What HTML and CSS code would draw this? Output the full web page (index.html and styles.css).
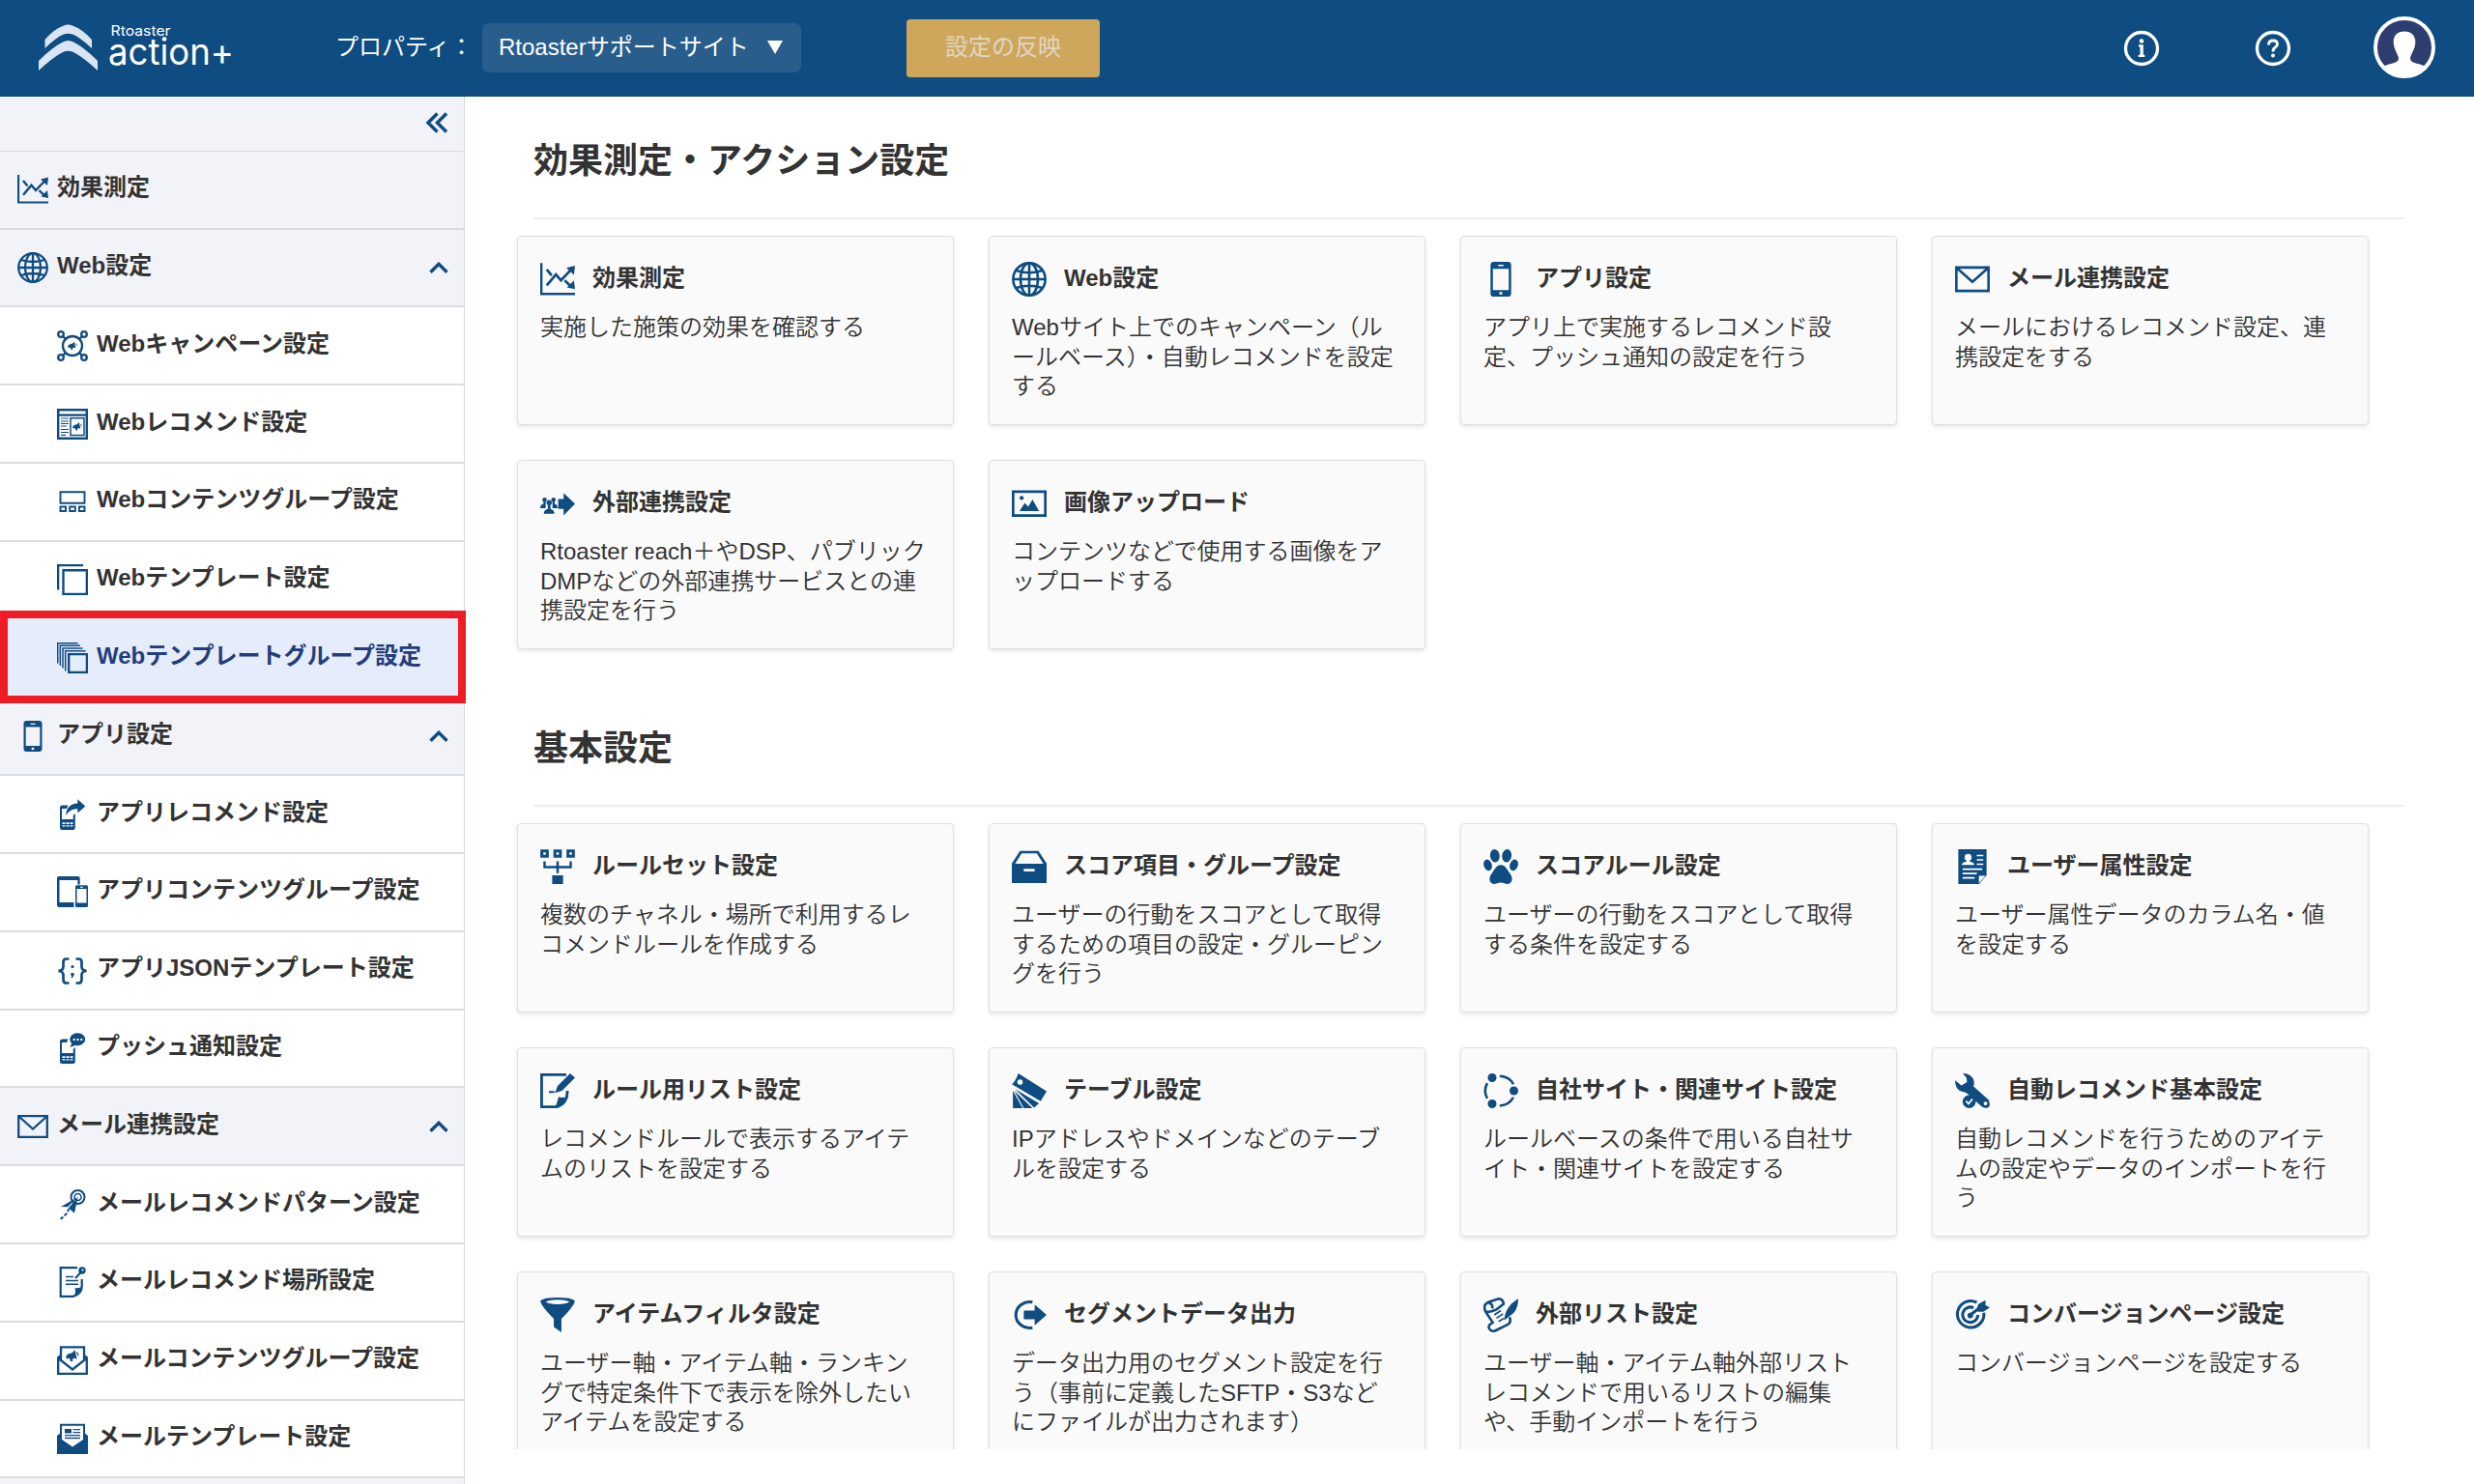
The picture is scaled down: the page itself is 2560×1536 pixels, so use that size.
FILE: index.html
```html
<!DOCTYPE html>
<html lang="ja">
<head>
<meta charset="utf-8">
<title>Rtoaster action+</title>
<link rel="stylesheet" href="styles.css">
</head>
<body>
<svg class="sprite" aria-hidden="true">
  <symbol id="horn" viewBox="0 0 12 12"><path d="M0 7L1.500 4.500L6 3L8 .5L10 8.500L6.500 8L6 11L4 10.500L3.500 8L1 8.500Z" fill="currentColor"/><path d="M9.500 2.500Q11.500 4 11 6" fill="none" stroke="currentColor"/></symbol>
  <symbol id="chart" viewBox="0 0 32 32"><path d="M1 1V29.500H32" fill="none" stroke="currentColor" stroke-width="2.200"/><path d="M6 21.700L14.500 11.700L19 17L29 6.500M6 7L10.500 12.500M22.500 17L28 22.500" fill="none" stroke="currentColor" stroke-width="2.400"/><path d="M32 3.500L31 12L24 5.500ZM32 25L24.500 23.500L31 17Z" fill="currentColor"/></symbol>
  <symbol id="globe" viewBox="0 0 32 32"><g fill="none" stroke="currentColor" stroke-width="2.300"><circle cx="16" cy="16" r="14.800"/><ellipse cx="16" cy="16" rx="8" ry="14.800"/><path d="M16 1V31M1 16H31M4 8Q16 12 28 8M4 24Q16 20 28 24"/></g></symbol>
  <symbol id="phone" viewBox="0 0 32 32"><path fill-rule="evenodd" d="M9.500 0h13a3 3 0 0 1 3 3v26a3 3 0 0 1-3 3h-13a3 3 0 0 1-3-3v-26a3 3 0 0 1 3-3zM8.700 6.500v19.500h14.600v-19.500zM13.500 2.700v1.400h5v-1.400zM14.700 27.700v2.400h2.600v-2.400z" fill="currentColor"/></symbol>
  <symbol id="mail" viewBox="0 0 32 32"><path d="M1.200 5.200H30.800V26.800H1.200ZM1.500 5.500L16 18.500L30.500 5.500" fill="none" stroke="currentColor" stroke-width="2.300"/></symbol>
  <symbol id="campaign" viewBox="0 0 32 32"><g fill="none" stroke="currentColor" stroke-width="2.300"><circle cx="16" cy="16" r="10"/><circle cx="4" cy="4" r="2.800"/><circle cx="28" cy="4" r="2.800"/><circle cx="4" cy="28" r="2.800"/><circle cx="28" cy="28" r="2.800"/><path d="M6 6L9 9M26 6L23 9M6 26L9 23M26 26L23 23"/></g><use href="#horn" x="10.500" y="11" width="11" height="10"/></symbol>
  <symbol id="recommend" viewBox="0 0 32 32"><g fill="none" stroke="currentColor"><path d="M1.200 1.200H30.800V30.800H1.200ZM1 6.600H31" stroke-width="2.400"/><path d="M14 9.800H28V27.500H14Z" stroke-width="1.500"/><path d="M4 10h8M4 13h8M4 15.500h8M4 18h6M4 21.500h8M4 24.500h8M4 27.300h5" stroke-width="1.200"/></g><use href="#horn" x="15.500" y="13.500" width="11" height="10"/></symbol>
  <symbol id="contents" viewBox="0 0 32 32"><g fill="none" stroke="currentColor" stroke-width="1.900"><path d="M3.500 6.300H28.500V17.700H3.500ZM3.500 21.500h5.500v4.500h-5.500ZM13.200 21.500h5.600v4.500h-5.600ZM23 21.500h5.500v4.500h-5.500Z"/></g></symbol>
  <symbol id="template" viewBox="0 0 32 32"><g fill="none" stroke="currentColor" stroke-width="2.400"><path d="M1.100 26.500V1.100H27M6.500 6.200H30.900V30.900H6.500Z"/></g></symbol>
  <symbol id="tgroup" viewBox="0 0 32 32"><path d="M12.200 12.200H30.900V30.900H12.200Z" fill="none" stroke="currentColor" stroke-width="2.300"/><path d="M.7 21.500V.7H21.500M3.300 24V3.300H24M6 26.500V6H26.500M8.700 29.500V8.700H29.500" fill="none" stroke="currentColor" stroke-width="1.500"/></symbol>
  <symbol id="handset" viewBox="0 0 32 32"><path fill-rule="evenodd" d="M11.500 6.500H5.500a2.500 2.500 0 0 0-2.500 2.500V29.500a2.500 2.500 0 0 0 2.500 2.500H16.300a2.500 2.500 0 0 0 2.500-2.500V15L16.700 17V21H5V10H10ZM5.500 24.300h3v1.600h-3zM9.500 24.300h3v1.600h-3zM13.500 24.300h3v1.600h-3zM5.500 27.300h3v1.300h-3zM9.500 27.300h3v1.300h-3zM13.500 27.300h3v1.300h-3z" fill="currentColor"/></symbol>
  <symbol id="apprec" viewBox="0 0 32 32"><use href="#handset"/><path d="M9 17Q10 5 21.300 4.500V.3L29.300 7.500L21.300 14.500V10.300Q14 9.500 9 17Z" fill="currentColor"/></symbol>
  <symbol id="appcontents" viewBox="0 0 32 32"><path fill-rule="evenodd" d="M2 0H21.700a2 2 0 0 1 2 2V8.500H21.400V4H2.500V27H17.500V32H2a2 2 0 0 1-2-2V2a2 2 0 0 1 2-2z" fill="currentColor"/><path fill-rule="evenodd" d="M20.500 9.300H30.500a1.500 1.500 0 0 1 1.500 1.500V30.500a1.500 1.500 0 0 1-1.500 1.500H20.500a1.500 1.500 0 0 1-1.500-1.500V10.800a1.500 1.500 0 0 1 1.500-1.500zM20.500 13V27.500H30.500V13zM24 10.700v1h3v-1z" fill="currentColor"/></symbol>
  <symbol id="json" viewBox="0 0 32 32"><g fill="none" stroke="currentColor" stroke-width="2.700"><path d="M12.500 4.500H9.500Q6.500 4.500 6.500 8V12.500Q6.500 16.500 1.500 17Q6.500 17.500 6.500 21V26Q6.500 29.500 9.500 29.500H12.500M19.500 4.500H22.500Q25.500 4.500 25.500 8V12.500Q25.500 16.500 30.500 17Q25.500 17.500 25.500 21V26Q25.500 29.500 22.500 29.500H19.500"/></g><circle cx="16" cy="12.500" r="1.600" fill="currentColor"/><path d="M14.400 19h3.200v2.500l-2 3h-1l.6-2.500h-.8z" fill="currentColor"/></symbol>
  <symbol id="push" viewBox="0 0 32 32"><use href="#handset"/><path d="M21.300.3a8 6.500 0 1 1-2.500 12.700L13.500 15L15.200 11A8 6.500 0 0 1 21.300.3Z" fill="currentColor"/><path d="M16.700 6h2v2h-2zM20.500 6h2v2h-2zM24.300 6h2v2h-2z" class="paper"/></symbol>
  <symbol id="pattern" viewBox="0 0 32 32"><g fill="none" stroke="currentColor"><circle cx="21.500" cy="8" r="7" stroke-width="2"/><circle cx="21.500" cy="8" r="3.500" stroke-width="1.500"/><path d="M12.500 20L10 25L3 31.500" stroke-width="2" stroke-dasharray="3.500 1.800"/></g><path d="M21.500 8L4 18L11 18.300ZM21.500 8L12 19.300L18 24.800Z" fill="currentColor"/></symbol>
  <symbol id="place" viewBox="0 0 32 32"><path d="M21 1.200H3.700V30.800H17Q26 28 25.700 20V13" fill="none" stroke="currentColor" stroke-width="2.200"/><path d="M17 31Q20 27 18.500 22Q23 23 26.500 20Q25 28 17 31Z" fill="currentColor"/><path d="M9 10.500H17M9 14.500H22M9 18.300H22" stroke="currentColor" stroke-width="1.400"/><circle cx="26" cy="4" r="3.700" fill="currentColor"/><circle cx="26.500" cy="3.500" r="1" class="paper"/><path d="M24.500 6L19 12" stroke="currentColor" stroke-width="2"/></symbol>
  <symbol id="mailcontents" viewBox="0 0 32 32"><path d="M4 15V2.300H28V15M4 11L1.200 13V29.800H30.800V13L28 11M1.500 14L16 25.500L30.500 14" fill="none" stroke="currentColor" stroke-width="2.300"/><use href="#horn" x="8.500" y="4.500" width="15" height="14"/></symbol>
  <symbol id="mailtemplate" viewBox="0 0 32 32"><path fill-rule="evenodd" d="M3 .8H29V10.800L32 13V32H0V13L3 10.800ZM5 2.800V17L16 24.500L27 17V2.800Z" fill="currentColor"/><path d="M8 6h7v4.500H8z" fill="currentColor"/><path d="M16.500 6.700H24M16.500 9.700H24M8 12.700H24M8 15.500H24" stroke="currentColor" stroke-width="1.300"/></symbol>
  <symbol id="external" viewBox="0 0 32 32"><path d="M16.500 12H21.500V6.500L32 16.500L21.500 27V21H16.500Z" fill="currentColor"/><g fill="currentColor"><circle cx="4" cy="12.700" r="2"/><circle cx="12.200" cy="12.700" r="2"/><path d="M0 20.500Q0 17 3 16.500V14H5V20.500ZM16 20.500Q16 17 13.300 16.500V14H11.300V20.500Z"/><circle cx="8.200" cy="15.300" r="2.400"/><path d="M3.300 25.500Q3.300 22 7 21V17H9.400V21Q13 22 13 25.500Z"/></g></symbol>
  <symbol id="image" viewBox="0 0 32 32"><path d="M1.200 5.200H30.800V27.300H1.200Z" fill="none" stroke="currentColor" stroke-width="2.400"/><circle cx="9" cy="11" r="1.900" fill="currentColor"/><path d="M7 23L12 15.500L15 19L19 12.500L25 23Z" fill="currentColor"/></symbol>
  <symbol id="ruleset" viewBox="0 0 32 32"><path d="M1.500 1.500h5v5h-5zM13.500 1.500h5v5h-5zM25.500 1.500h5v5h-5z" fill="none" stroke="currentColor" stroke-width="2.700"/><path d="M4 11V16.500H28V11M16 11V22" fill="none" stroke="currentColor" stroke-width="2.200"/><path d="M11 24H21V32H11Z" fill="currentColor"/></symbol>
  <symbol id="tray" viewBox="0 0 32 32"><path fill-rule="evenodd" d="M7.500 1.500H24.500L32 13V31H0V13ZM9 3.700L3 13.300H29L23 3.700ZM11 18V20.500H21V18Z" fill="currentColor"/></symbol>
  <symbol id="paw" viewBox="0 0 32 32"><g fill="currentColor"><ellipse cx="10.500" cy="6" rx="4.300" ry="6" transform="rotate(-8 10.500 6)"/><ellipse cx="21.500" cy="6" rx="4.300" ry="6" transform="rotate(8 21.500 6)"/><ellipse cx="4" cy="14.500" rx="3.700" ry="5.300" transform="rotate(-18 4 14.500)"/><ellipse cx="28" cy="14.500" rx="3.700" ry="5.300" transform="rotate(18 28 14.500)"/><path d="M16 14.500C20 14.500 22 19 24.500 22.500C28 27.500 26 32 22 32C20 32 19 30.700 16 30.700S12 32 10 32C6 32 4 27.500 7.500 22.500C10 19 12 14.500 16 14.500Z"/></g></symbol>
  <symbol id="profile" viewBox="0 0 32 32"><path d="M3 0H29V24L22 32H3Z" fill="currentColor"/><g class="paper"><circle cx="12" cy="7.500" r="3.200"/><path d="M6 14.500Q7 11.500 10.500 11.500V9H13.500V11.500Q17 11.500 18 14.500ZM22 31V24.500H28Z"/><path d="M20 5h6v1.500h-6zM20 9h6v1.500h-6zM20 13h6v1.500h-6zM7 17.500h18v1.600H7zM7 21.500h13v1.600H7zM7 25.500h11v1.600H7z"/></g></symbol>
  <symbol id="rulelist" viewBox="0 0 32 32"><path d="M24 1.200H1.300V30.800H15Q25 28 25 16" fill="none" stroke="currentColor" stroke-width="2.500"/><path d="M14 31L17 21.500Q20 23 26 21Q23 29 14 31ZM27.500 0L32 4L20 16L13.500 18L16 11.500ZM8 16.300H13V18H8Z" fill="currentColor"/></symbol>
  <symbol id="swatch" viewBox="0 0 32 32"><path fill-rule="evenodd" d="M6 0L32 16.500L26.500 25.500L0 10Q3 8 6 0ZM7.500 5.500a2.500 2.500 0 1 0 .1 5a2.500 2.500 0 1 0-.1-5Z" fill="currentColor"/><path d="M3 14.500L25 27.500L20.500 31.500ZM2.300 16L19 32H11ZM1 16L10 32H1Z" fill="currentColor"/></symbol>
  <symbol id="sites" viewBox="0 0 32 32"><g fill="currentColor"><circle cx="8" cy="4" r="4"/><circle cx="28" cy="16" r="4"/><circle cx="8" cy="28" r="4"/></g><path d="M15 2.500Q24 3 27.500 10M27.500 22Q24 29 15 29.800M3.500 9Q-.3 16 3.500 23" fill="none" stroke="currentColor" stroke-width="2.300"/></symbol>
  <symbol id="wrench" viewBox="0 0 32 32"><path fill-rule="evenodd" d="M7 0Q14 0 17 5.500Q18 9 17 12L30.500 24Q33 28 31 31Q27 33 24 30L10 17.500Q3 17 1 12Q0 9 0 6.500L6 11L11 8L10.500 4ZM28 26a1.700 1.700 0 1 0 .1 3.400a1.700 1.700 0 1 0-.1-3.400Z" fill="currentColor"/><circle cx="13" cy="26" r="6" fill="currentColor"/><path d="M10 25.500L12.500 28L16 23.500" class="paper-line"/></symbol>
  <symbol id="funnel" viewBox="0 0 32 32"><path fill-rule="evenodd" d="M0 3Q3 0 16 0T32 3Q31 8 19.500 19.500V32L12.500 27V19.500Q1 8 0 3ZM5 3.800Q8 6.200 16 6.200T27 3.800Q23 2 16 2T5 3.800Z" fill="currentColor"/></symbol>
  <symbol id="export" viewBox="0 0 32 32"><path d="M19 4.300A12.500 12 0 1 0 19 27.700" fill="none" stroke="currentColor" stroke-width="2.700"/><path d="M11 12H21V6.500L32 16L21 25.500V20H11Z" fill="currentColor"/></symbol>
  <symbol id="scroll" viewBox="0 0 32 32"><path d="M2 13Q-1 7 4 4.500L14 1.200Q18 1 18.500 6L12 11Q5 14 2 13ZM2 13L8.500 23Q3 26 6 29.500Q8 32 12 30L22 25Q26 23 24 18M5 5Q9 6 8 10" fill="none" stroke="currentColor" stroke-width="2.300"/><path d="M10 16L16 12M12 19L18 15M14 22L19 19" stroke="currentColor" stroke-width="1.500"/><path d="M32 1Q32 9 28 14L19 21Q20 8 32 1Z" fill="currentColor"/></symbol>
  <symbol id="target" viewBox="0 0 32 32"><g fill="none" stroke="currentColor" stroke-width="2.700"><path d="M20 4.500A12.200 12.200 0 1 0 26.500 14M17 9.500A7 7 0 1 0 21 16M14 16L26 7"/></g><circle cx="14" cy="16.500" r="2.600" fill="currentColor"/><path d="M20 10L21.500 6L28 2.500L28 7L32 9L26 13L21 13Z" fill="currentColor"/></symbol>
  <symbol id="up" viewBox="0 0 20 12"><path d="M1.500 10.800L10 2.300L18.500 10.800" fill="none" stroke="currentColor" stroke-width="3.400"/></symbol>
</svg>

<header class="topbar">
  <svg class="logo" viewBox="0 0 210 60">
    <path d="M6.500 25V16Q16 5 26 1.500Q30.500-.5 35 1.500Q45 5 55 16V25Q42 13 35 10.500Q30.500 9 26 10.500Q19 13 6.500 25Z" fill="#d9e5f2"/>
    <path d="M0 48V38Q14 24 25 18.500Q30.500 15.500 36 18.500Q47 24 61 38V48Q46 34 36 29Q30.500 26.500 25 29Q15 34 0 48Z" fill="#d9e5f2"/>
    <text x="74.500" y="11.500" class="logo-small" textLength="62" lengthAdjust="spacingAndGlyphs">Rtoaster</text>
    <text x="72" y="41.500" class="logo-big" textLength="130" lengthAdjust="spacingAndGlyphs">action+</text>
  </svg>
  <span class="prop">プロパティ：</span>
  <div class="select"><span>Rtoasterサポートサイト</span><svg class="tri" viewBox="0 0 16 14"><path d="M0 0H16L8 14Z" fill="#fff"/></svg></div>
  <button class="apply">設定の反映</button>
  <div class="tools">
    <svg class="tool" viewBox="0 0 38 38"><circle cx="19" cy="19" r="16.500" fill="none" stroke="#fff" stroke-width="3.300"/><circle cx="19" cy="11.500" r="2.300" fill="#fff"/><path d="M16 15.300H20.800V25.700H22.300V28H15.700V25.700H17.500V17.500H16Z" fill="#fff"/></svg>
    <svg class="tool" viewBox="0 0 38 38"><circle cx="19" cy="19" r="16.500" fill="none" stroke="#fff" stroke-width="3.300"/><path d="M14.500 15.500Q14.500 11 19 11Q23.500 11 23.500 14.700Q23.500 16.700 21 18.300Q19 19.500 19 22.500" fill="none" stroke="#fff" stroke-width="2.900"/><circle cx="19" cy="26.500" r="2" fill="#fff"/></svg>
    <svg class="avatar" viewBox="0 0 64 64"><circle cx="32" cy="32" r="30" fill="#2e3d70" stroke="#fff" stroke-width="4"/><path d="M32 15.500C39.500 15.500 43.500 20 43.300 27C43.100 34 38.500 39 38 43.500C38 49 47 48 53 51.500A29 29 0 0 1 11 51.500C17 48 26 49 26 43.500C25.500 39 20.900 34 20.700 27C20.500 20 24.500 15.500 32 15.500Z" fill="#fff"/></svg>
  </div>
</header>

<div class="body">
  <nav class="side">
    <div class="collapse"><svg viewBox="0 0 24 22"><path d="M12.500 1.500L3 11L12.500 20.500M22 1.500L12.500 11L22 20.500" fill="none" stroke="currentColor" stroke-width="3.500"/></svg></div>
    <div class="row"><svg class="ic"><use href="#chart"/></svg><span>効果測定</span></div>
    <div class="row"><svg class="ic"><use href="#globe"/></svg><span>Web設定</span><svg class="up"><use href="#up"/></svg></div>
    <div class="row sub"><svg class="ic"><use href="#campaign"/></svg><span>Webキャンペーン設定</span></div>
    <div class="row sub"><svg class="ic"><use href="#recommend"/></svg><span>Webレコメンド設定</span></div>
    <div class="row sub"><svg class="ic"><use href="#contents"/></svg><span>Webコンテンツグループ設定</span></div>
    <div class="row sub"><svg class="ic"><use href="#template"/></svg><span>Webテンプレート設定</span></div>
    <div class="row sub active"><svg class="ic"><use href="#tgroup"/></svg><span>Webテンプレートグループ設定</span></div>
    <div class="row"><svg class="ic"><use href="#phone"/></svg><span>アプリ設定</span><svg class="up"><use href="#up"/></svg></div>
    <div class="row sub"><svg class="ic"><use href="#apprec"/></svg><span>アプリレコメンド設定</span></div>
    <div class="row sub"><svg class="ic"><use href="#appcontents"/></svg><span>アプリコンテンツグループ設定</span></div>
    <div class="row sub"><svg class="ic"><use href="#json"/></svg><span>アプリJSONテンプレート設定</span></div>
    <div class="row sub"><svg class="ic"><use href="#push"/></svg><span>プッシュ通知設定</span></div>
    <div class="row"><svg class="ic"><use href="#mail"/></svg><span>メール連携設定</span><svg class="up"><use href="#up"/></svg></div>
    <div class="row sub"><svg class="ic"><use href="#pattern"/></svg><span>メールレコメンドパターン設定</span></div>
    <div class="row sub"><svg class="ic"><use href="#place"/></svg><span>メールレコメンド場所設定</span></div>
    <div class="row sub"><svg class="ic"><use href="#mailcontents"/></svg><span>メールコンテンツグループ設定</span></div>
    <div class="row sub"><svg class="ic"><use href="#mailtemplate"/></svg><span>メールテンプレート設定</span></div>
  </nav>

  <main class="main">
    <section class="section">
      <h2>効果測定・アクション設定</h2>
      <div class="cards">
        <article class="card"><h3><svg class="ic"><use href="#chart"/></svg>効果測定</h3><p>実施した施策の効果を確認する</p></article>
        <article class="card"><h3><svg class="ic"><use href="#globe"/></svg>Web設定</h3><p>Webサイト上でのキャンペーン（ル<br>ールベース）・自動レコメンドを設定<br>する</p></article>
        <article class="card"><h3><svg class="ic"><use href="#phone"/></svg>アプリ設定</h3><p>アプリ上で実施するレコメンド設<br>定、プッシュ通知の設定を行う</p></article>
        <article class="card"><h3><svg class="ic"><use href="#mail"/></svg>メール連携設定</h3><p>メールにおけるレコメンド設定、連<br>携設定をする</p></article>
        <article class="card"><h3><svg class="ic"><use href="#external"/></svg>外部連携設定</h3><p>Rtoaster reach＋やDSP、パブリック<br>DMPなどの外部連携サービスとの連<br>携設定を行う</p></article>
        <article class="card"><h3><svg class="ic"><use href="#image"/></svg>画像アップロード</h3><p>コンテンツなどで使用する画像をア<br>ップロードする</p></article>
      </div>
    </section>
    <section class="section">
      <h2>基本設定</h2>
      <div class="cards">
        <article class="card"><h3><svg class="ic"><use href="#ruleset"/></svg>ルールセット設定</h3><p>複数のチャネル・場所で利用するレ<br>コメンドルールを作成する</p></article>
        <article class="card"><h3><svg class="ic"><use href="#tray"/></svg>スコア項目・グループ設定</h3><p>ユーザーの行動をスコアとして取得<br>するための項目の設定・グルーピン<br>グを行う</p></article>
        <article class="card"><h3><svg class="ic"><use href="#paw"/></svg>スコアルール設定</h3><p>ユーザーの行動をスコアとして取得<br>する条件を設定する</p></article>
        <article class="card"><h3><svg class="ic"><use href="#profile"/></svg>ユーザー属性設定</h3><p>ユーザー属性データのカラム名・値<br>を設定する</p></article>
        <article class="card"><h3><svg class="ic"><use href="#rulelist"/></svg>ルール用リスト設定</h3><p>レコメンドルールで表示するアイテ<br>ムのリストを設定する</p></article>
        <article class="card"><h3><svg class="ic"><use href="#swatch"/></svg>テーブル設定</h3><p>IPアドレスやドメインなどのテーブ<br>ルを設定する</p></article>
        <article class="card"><h3><svg class="ic"><use href="#sites"/></svg>自社サイト・関連サイト設定</h3><p>ルールベースの条件で用いる自社サ<br>イト・関連サイトを設定する</p></article>
        <article class="card"><h3><svg class="ic"><use href="#wrench"/></svg>自動レコメンド基本設定</h3><p>自動レコメンドを行うためのアイテ<br>ムの設定やデータのインポートを行<br>う</p></article>
        <article class="card"><h3><svg class="ic"><use href="#funnel"/></svg>アイテムフィルタ設定</h3><p>ユーザー軸・アイテム軸・ランキン<br>グで特定条件下で表示を除外したい<br>アイテムを設定する</p></article>
        <article class="card"><h3><svg class="ic"><use href="#export"/></svg>セグメントデータ出力</h3><p>データ出力用のセグメント設定を行<br>う（事前に定義したSFTP・S3など<br>にファイルが出力されます）</p></article>
        <article class="card"><h3><svg class="ic"><use href="#scroll"/></svg>外部リスト設定</h3><p>ユーザー軸・アイテム軸外部リスト<br>レコメンドで用いるリストの編集<br>や、手動インポートを行う</p></article>
        <article class="card"><h3><svg class="ic"><use href="#target"/></svg>コンバージョンページ設定</h3><p>コンバージョンページを設定する</p></article>
      </div>
    </section>
  </main>
</div>
</body>
</html>
```
FILE: styles.css
```css
* { box-sizing: border-box; }
body {
  margin: 0;
  height: 1536px;
  overflow: hidden;
  background: #fff;
  color: #333;
  font: 24px/30.6px "Liberation Sans", "Noto Sans CJK JP", sans-serif;
}
.sprite { display: none; }
.paper { fill: #fff; }
.paper-line { fill: none; stroke: #fff; stroke-width: 1.6; }

.topbar {
  display: flex;
  align-items: center;
  height: 100px;
  padding-left: 40px;
  background: #0f4c81;
  border-bottom: 1px solid #0b3f6c;
  color: #fff;
}
.logo { width: 210px; height: 60px; margin-top: 10px; overflow: visible; }
.logo-small { font: 14.5px "Inter", sans-serif; fill: #fff; }
.logo-big { font: 38px "Inter", sans-serif; fill: #fff; }
.prop { width: 152px; margin-left: 97px; white-space: nowrap; }
.select {
  display: flex;
  align-items: center;
  justify-content: space-between;
  width: 330px;
  height: 51px;
  padding: 0 19px 1px 17px;
  border-radius: 7px;
  background: #295e8c;
}
.tri { width: 16px; height: 14px; }
.apply {
  width: 200px;
  height: 60px;
  margin-left: 109px;
  padding: 0 0 1px;
  border: 0;
  border-radius: 4px;
  background: #cfa75c;
  color: #dfd6c4;
  font: inherit;
}
.tools { display: flex; align-items: center; margin-left: auto; padding-right: 40px; }
.tool { width: 38px; height: 38px; margin-right: 98px; }
.avatar { width: 64px; height: 64px; margin: -1px 0 0 3px; }
.tool + .avatar { margin-left: -13px; }

.body { display: flex; height: 1436px; }
.side {
  flex: none;
  width: 481px;
  background: #f2f3f8;
  border-right: 1px solid #cfd6e6;
}
.collapse {
  display: flex;
  justify-content: flex-end;
  align-items: center;
  height: 56.8px;
  padding: 0 16px 2px 0;
  border-bottom: 1px solid #d9d9d9;
  color: #0f4c81;
}
.collapse svg { width: 24px; height: 22px; }
.row {
  display: flex;
  align-items: center;
  height: 80.8px;
  padding: 0 16px 0 18px;
  border-bottom: 2px solid #dcdcdc;
  font-weight: bold;
  white-space: nowrap;
}
.row span { margin-left: 9px; padding-bottom: 3.5px; }
.ic { flex: none; width: 32px; height: 32px; color: #0f4c81; }
.up { width: 20px; height: 12px; margin-left: auto; color: #0f4c81; }
.sub { padding-left: 59px; background: #fff; }
.active {
  position: relative;
  background: #e5ecfb;
  box-shadow: 0 -3px #e5ecfb;
  color: #223d7c;
  border-color: transparent;
}
.active::after {
  content: "";
  position: absolute;
  inset: -9.6px -2px -7.6px 0;
  border: 8px solid #ee1c25;
}

.main { flex: 1; height: 1400px; padding-left: 54px; overflow: hidden; }
.section { margin-bottom: 48px; }
h2 {
  height: 127px;
  width: 1936px;
  margin: 0 0 17px 17px;
  padding-top: 40px;
  border-bottom: 2px solid #eee;
  font-size: 36px;
  line-height: 54px;
}
.section + .section h2 { height: 115px; padding-top: 28px; }
.cards { display: grid; grid-template-columns: repeat(4, 452px); grid-auto-rows: 196px; gap: 36px; }
.card {
  padding: 25px 0 0 23px;
  border: 1px solid #e0e0e0;
  border-radius: 4px;
  background: #fafafa;
  box-shadow: 0 2px 4px rgba(0, 0, 0, .1);
  white-space: nowrap;
}
h3 { display: flex; align-items: flex-start; gap: 18px; height: 38px; margin: 0 0 16px; padding-top: 1px; font-size: 24px; line-height: 33px; }
h3 .ic { width: 36px; height: 36px; }
p { margin: 0; font-family: "Liberation Sans", "Noto Sans CJK JP DemiLight", "Noto Sans CJK JP", sans-serif; }
```
